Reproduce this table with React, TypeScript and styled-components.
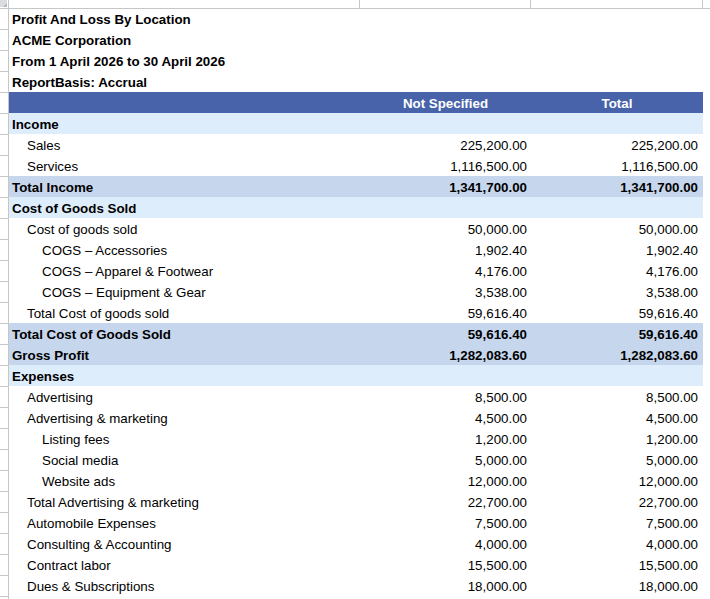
import React from "react";
import styled, { createGlobalStyle } from "styled-components";

const GlobalStyle = createGlobalStyle`
  html, body { margin: 0; padding: 0; background: #ffffff; }
  body { font-family: "Liberation Sans", Arial, sans-serif; font-size: 13.33px; color: #000; }
`;

type Tone = "plain" | "head" | "section" | "total";

const COLS = "9px 351px 171px 172px 1fr";
const GRID_LINE = "#c4c7c5";

const Sheet = styled.div`
  width: 710px;
  height: 599px;
  overflow: hidden;
  background: #fff;
`;

const ColumnStrip = styled.div`
  display: grid;
  grid-template-columns: ${COLS};
  height: 8px;
`;

const ColumnTab = styled.div`
  border-right: 1px solid ${GRID_LINE};
  &:last-child { border-right: none; }
`;

const Corner = styled.div`
  border-right: 1px solid ${GRID_LINE};
  position: relative;
  &::before {
    content: "";
    position: absolute;
    left: 0;
    top: 0;
    width: 7px;
    height: 7px;
    background: #dadce0;
  }
  &::after {
    content: "";
    position: absolute;
    left: 3px;
    top: 3px;
    width: 0;
    height: 0;
    border-left: 4px solid transparent;
    border-bottom: 4px solid #b4b8bd;
  }
`;

const toneBg: Record<Tone, string> = {
  plain: "transparent",
  head: "#4863a9",
  section: "#deedfb",
  total: "#c6d7ed",
};

const Row = styled.div<{ $tone: Tone; $bold?: boolean; $first?: boolean }>`
  display: grid;
  grid-template-columns: ${COLS};
  height: 21px;
  font-weight: ${(p) => (p.$bold ? 700 : 400)};
  color: ${(p) => (p.$tone === "head" ? "#ffffff" : "#000000")};
  box-shadow: ${(p) => (p.$first ? `inset 0 1px 0 ${GRID_LINE}` : "none")};
`;

const RowTab = styled.div`
  box-sizing: border-box;
  border-right: 1px solid ${GRID_LINE};
  border-top: 1px solid ${GRID_LINE};
`;

const Cell = styled.div<{ $tone: Tone }>`
  display: flex;
  align-items: center;
  box-sizing: border-box;
  padding-top: 2px;
  white-space: nowrap;
  background: ${(p) => toneBg[p.$tone]};
`;

const LabelCell = styled(Cell)<{ $indent: number }>`
  padding-left: ${(p) => 3 + p.$indent * 15}px;
`;

const AmountCell = styled(Cell)<{ $right: number; $center?: boolean }>`
  justify-content: ${(p) => (p.$center ? "center" : "flex-end")};
  padding-right: ${(p) => (p.$center ? 0 : p.$right)}px;
`;

const Spare = styled.div``;

type Line = {
  label: string;
  tone?: Tone;
  bold?: boolean;
  indent?: number;
  a?: string;
  b?: string;
  center?: boolean;
};

const lines: Line[] = [
  { label: "Profit And Loss By Location", bold: true },
  { label: "ACME Corporation", bold: true },
  { label: "From 1 April 2026 to 30 April 2026", bold: true },
  { label: "ReportBasis: Accrual", bold: true },
  { label: "", tone: "head", bold: true, a: "Not Specified", b: "Total", center: true },
  { label: "Income", tone: "section", bold: true },
  { label: "Sales", indent: 1, a: "225,200.00", b: "225,200.00" },
  { label: "Services", indent: 1, a: "1,116,500.00", b: "1,116,500.00" },
  { label: "Total Income", tone: "total", bold: true, a: "1,341,700.00", b: "1,341,700.00" },
  { label: "Cost of Goods Sold", tone: "section", bold: true },
  { label: "Cost of goods sold", indent: 1, a: "50,000.00", b: "50,000.00" },
  { label: "COGS \u2013 Accessories", indent: 2, a: "1,902.40", b: "1,902.40" },
  { label: "COGS \u2013 Apparel & Footwear", indent: 2, a: "4,176.00", b: "4,176.00" },
  { label: "COGS \u2013 Equipment & Gear", indent: 2, a: "3,538.00", b: "3,538.00" },
  { label: "Total Cost of goods sold", indent: 1, a: "59,616.40", b: "59,616.40" },
  { label: "Total Cost of Goods Sold", tone: "total", bold: true, a: "59,616.40", b: "59,616.40" },
  { label: "Gross Profit", tone: "total", bold: true, a: "1,282,083.60", b: "1,282,083.60" },
  { label: "Expenses", tone: "section", bold: true },
  { label: "Advertising", indent: 1, a: "8,500.00", b: "8,500.00" },
  { label: "Advertising & marketing", indent: 1, a: "4,500.00", b: "4,500.00" },
  { label: "Listing fees", indent: 2, a: "1,200.00", b: "1,200.00" },
  { label: "Social media", indent: 2, a: "5,000.00", b: "5,000.00" },
  { label: "Website ads", indent: 2, a: "12,000.00", b: "12,000.00" },
  { label: "Total Advertising & marketing", indent: 1, a: "22,700.00", b: "22,700.00" },
  { label: "Automobile Expenses", indent: 1, a: "7,500.00", b: "7,500.00" },
  { label: "Consulting & Accounting", indent: 1, a: "4,000.00", b: "4,000.00" },
  { label: "Contract labor", indent: 1, a: "15,500.00", b: "15,500.00" },
  { label: "Dues & Subscriptions", indent: 1, a: "18,000.00", b: "18,000.00" },
  { label: "" },
];

export default function App() {
  return (
    <>
      <GlobalStyle />
      <Sheet>
        <ColumnStrip>
          <Corner />
          <ColumnTab />
          <ColumnTab />
          <ColumnTab />
          <ColumnTab />
        </ColumnStrip>
        {lines.map((l, i) => {
          const tone = l.tone ?? "plain";
          return (
            <Row key={i} $tone={tone} $bold={l.bold} $first={i === 0}>
              <RowTab />
              <LabelCell $tone={tone} $indent={l.indent ?? 0}>
                {l.label}
              </LabelCell>
              <AmountCell $tone={tone} $right={4} $center={l.center}>
                {l.a ?? ""}
              </AmountCell>
              <AmountCell $tone={tone} $right={5} $center={l.center}>
                {l.b ?? ""}
              </AmountCell>
              <Spare />
            </Row>
          );
        })}
      </Sheet>
    </>
  );
}
